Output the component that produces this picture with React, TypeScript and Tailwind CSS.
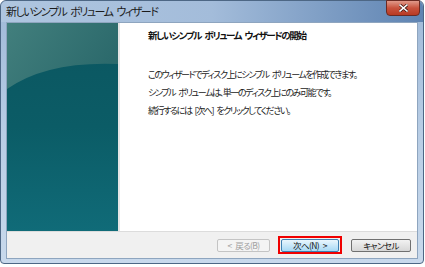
import React from "react";

const jp = "font-['Noto_Sans_CJK_JP','Noto_Sans',sans-serif] [font-feature-settings:'palt']";

function Button({ label, disabled, primary }: { label: string; disabled?: boolean; primary?: boolean }) {
  return (
    <div
      className={`h-[13px] flex items-center justify-center rounded-[2px] border text-[8.5px] leading-none tracking-[-0.6px] ${jp} ${
        disabled
          ? "border-[#c4c4c4] bg-[#f4f4f4] text-[#a0a0a0]"
          : primary
          ? "border-[#3c7fb1] bg-gradient-to-b from-[#eaf6fd] to-[#a7d9f5] text-[#111]"
          : "border-[#707070] bg-gradient-to-b from-[#f2f2f2] to-[#d6d6d6] text-[#111]"
      }`}
    >
      {label}
    </div>
  );
}

export default function App() {
  return (
    <div className="w-[425px] h-[267px] bg-white overflow-hidden">
      <div className="w-[424px] h-[264px] flex flex-col rounded-t-[6px] rounded-b-[4px] border border-[#4d6785] bg-gradient-to-b from-[#9fb9d8] via-[#b8cde5] to-[#c8d9ec]">
        {/* Title bar */}
        <div className="relative h-[21px] shrink-0 flex items-center pl-[5px] rounded-t-[6px] bg-gradient-to-r from-[#afc6e0] via-[#a3bcda] to-[#5f84b2]">
          <span className={`text-[11px] text-[#1b1b1b] tracking-[-1.5px] ${jp}`}>
            新しいシンプル{"\u2002"}ボリューム{"\u2002"}ウィザード
          </span>
          <div className="absolute right-[3px] top-[-1px] w-[34px] h-[16px] rounded-b-[4px] border border-[#6b2a22] bg-gradient-to-b from-[#e0998a] via-[#c8523d] to-[#b83a22] flex items-center justify-center">
            <svg width="9" height="8" viewBox="0 0 9 8">
              <path d="M1 1 L8 7 M8 1 L1 7" stroke="#3a1410" strokeWidth="3" strokeLinecap="square" />
              <path d="M1 1 L8 7 M8 1 L1 7" stroke="#ffffff" strokeWidth="1.6" strokeLinecap="square" />
            </svg>
          </div>
        </div>

        {/* Client area */}
        <div className="mx-[5px] h-[237px] flex flex-col border border-[#8ea5bf] bg-white">
          <div className="flex h-[208px]">
            <div className="relative w-[111px] h-full overflow-hidden bg-gradient-to-b from-[#0b5660] via-[#0b5c66] to-[#106b78]">
              <svg className="absolute inset-0" width="111" height="208" viewBox="0 0 111 208">
                <defs>
                  <linearGradient id="gl" x1="0" y1="0" x2="1" y2="0.4">
                    <stop offset="0" stopColor="#427f7d" />
                    <stop offset="1" stopColor="#2c6a6c" />
                  </linearGradient>
                </defs>
                <path d="M0 0 H111 V41 Q40 38 0 66 Z" fill="url(#gl)" />
              </svg>
            </div>
            <div className="w-[2px] bg-[#e6e6e6]" />
            <div className="flex-1 pl-[28px] pt-[5px]">
              <div className={`text-[9.5px] font-bold text-[#111] ${jp} tracking-[-1.35px]`}>
                新しいシンプル{"\u2002"}ボリューム{"\u2002"}ウィザードの開始
              </div>
              <div className={`mt-[27px] flex flex-col gap-[6px] text-[9px] leading-[12px] text-[#222] tracking-[-1.4px] ${jp}`}>
                <span>このウィザードでディスク上にシンプル{"\u2002"}ボリュームを作成できます。</span>
                <span>シンプル{"\u2002"}ボリュームは、単一のディスク上にのみ可能です。</span>
                <span>続行するには{"\u2002"}[次へ]{"\u2002"}をクリックしてください。</span>
              </div>
            </div>
          </div>
          <div className="flex-1 bg-[#f0f0f0] border-t border-[#dcdcdc] flex items-center justify-end pr-[6px]">
            <div className="w-[53px]">
              <Button label={"<\u2002戻る(B)"} disabled />
            </div>
            <div className="ml-[8px] w-[64px] h-[18px] border-[2px] border-[#f00000] flex items-center justify-center p-[1px]">
              <div className="w-full">
                <Button label={"次へ(N)\u2002>"} primary />
              </div>
            </div>
            <div className="ml-[9px] w-[60px]">
              <Button label="キャンセル" />
            </div>
          </div>
        </div>
      </div>
    </div>
  );
}
